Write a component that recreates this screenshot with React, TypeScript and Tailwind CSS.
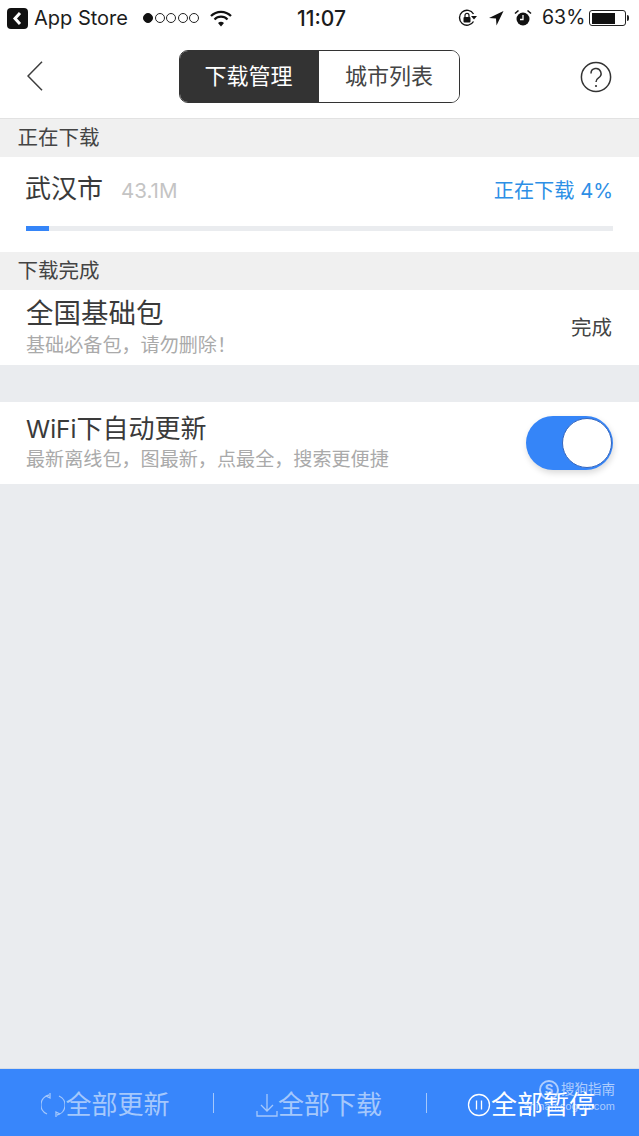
const cjk = "font-['Inter','Noto_Sans_CJK_SC',sans-serif]";

function StatusBar() {
  return (
    <div className="flex h-[36px] items-center bg-white pl-[7px] pr-[10px] text-[20px] text-[#1c1c1c]">
      <div className="flex w-[236px] items-center">
        <svg width="21" height="21" viewBox="0 0 21 21" className="mr-[6px]">
          <rect x="0" y="0" width="21" height="21" rx="4" fill="#111" />
          <path d="M13 5 L8 10.5 L13 16" fill="none" stroke="#fff" strokeWidth="3" />
        </svg>
        <span className="w-[109px] whitespace-nowrap text-[20px] leading-none">App Store</span>
        <div className="flex items-center gap-[1.5px]">
          <span className="h-[10px] w-[10px] rounded-full border border-[#111] bg-[#111]" />
          <span className="h-[10px] w-[10px] rounded-full border border-[#222]" />
          <span className="h-[10px] w-[10px] rounded-full border border-[#222]" />
          <span className="h-[10px] w-[10px] rounded-full border border-[#222]" />
          <span className="h-[10px] w-[10px] rounded-full border border-[#222]" />
        </div>
        <svg width="22" height="17" viewBox="0 0 22 17" className="ml-[11px]">
          <path d="M1 6 A14 14 0 0 1 21 6" fill="none" stroke="#111" strokeWidth="2.2" />
          <path d="M4.5 9.5 A9 9 0 0 1 17.5 9.5" fill="none" stroke="#111" strokeWidth="2.2" />
          <path d="M8 13 A4.5 4.5 0 0 1 14 13 L11 16.5 Z" fill="#111" />
        </svg>
      </div>
      <span className="ml-[54px] text-[21px] font-medium leading-none">11:07</span>
      <div className="ml-auto flex items-center">
        <svg width="20" height="18" viewBox="0 0 20 18">
          <path d="M15.5 12.5 A7.5 7.5 0 1 1 15.5 5" fill="none" stroke="#111" strokeWidth="1.4" />
          <path d="M13 7 L19 7 L16 10.5 Z" fill="#111" />
          <rect x="5.5" y="8" width="7" height="5.5" rx="1" fill="#111" />
          <path d="M7 8 V6.3 A2 2 0 0 1 11 6.3 V8" fill="none" stroke="#111" strokeWidth="1.2" />
        </svg>
        <svg width="16" height="16" viewBox="0 0 16 16" className="ml-[10px]">
          <path d="M15.5 1 L1 8 L8 8.5 L8.5 15.5 Z" fill="#111" />
        </svg>
        <svg width="18" height="18" viewBox="0 0 18 18" className="ml-[10px]">
          <circle cx="9" cy="10" r="6.5" fill="#111" />
          <path d="M9 6 V10.5 H6" fill="none" stroke="#fff" strokeWidth="1.3" />
          <path d="M1 4.5 L4.5 1.5 M17 4.5 L13.5 1.5" stroke="#111" strokeWidth="1.6" />
        </svg>
        <span className="ml-[10px] w-[47px] text-[19.5px] leading-none">63%</span>
        <div className="flex items-center">
          <div className="h-[16px] w-[37px] rounded-[3px] border border-[#222] p-[1.5px]">
            <div className="h-full w-[23px] bg-[#111]" />
          </div>
          <div className="ml-[1px] h-[6px] w-[2px] rounded-r-full bg-[#222]" />
        </div>
      </div>
    </div>
  );
}

function NavBar() {
  return (
    <div className="flex h-[83px] items-center justify-between border-b border-[#e2e2e2] bg-white pb-[2px] pl-[27px] pr-[27px]">
      <svg width="16" height="30" viewBox="0 0 16 30">
        <path d="M15 0.8 L1 15 L15 29.2" fill="none" stroke="#3d3d3d" strokeWidth="1.5" />
      </svg>
      <div className="ml-[16px] flex h-[53px] w-[281px] overflow-hidden rounded-[9px] border border-[#333] text-[22px] leading-none">
        <div className="flex w-[139px] items-center justify-center bg-[#333333] pr-[2px] text-white">下载管理</div>
        <div className="flex flex-1 items-center justify-center bg-white text-[#444]">城市列表</div>
      </div>
      <svg width="32" height="32" viewBox="0 0 32 32" className="mt-[2px]">
        <circle cx="16" cy="16" r="14.6" fill="none" stroke="#333" strokeWidth="1.5" />
        <path d="M11 12.5 A5 5 0 1 1 18.5 16.8 C16.6 18 16 18.8 16 21" fill="none" stroke="#333" strokeWidth="1.5" />
        <circle cx="16" cy="25" r="1.1" fill="#333" />
      </svg>
    </div>
  );
}

function SectionHeader({ title }: { title: string }) {
  return (
    <div className="flex h-[38px] items-center bg-[#f0f0f0] pl-[17.5px] text-[20.5px] leading-none text-[#444]">
      {title}
    </div>
  );
}

function Toggle() {
  return (
    <div className="flex h-[54px] w-[87px] items-center justify-end rounded-full bg-[#3585f8] pr-[1px] shadow-[1px_3px_6px_rgba(0,0,0,0.15)]">
      <div className="h-[50px] w-[50px] rounded-full border border-[#3566bd] bg-white" />
    </div>
  );
}

function BottomItem({ icon, label, active, width }: { icon: React.ReactNode; label: string; active?: boolean; width: string }) {
  return (
    <div className={`flex items-center justify-center pt-[5px] ${width} ${active ? "text-white" : "text-[#a5c8fb]"}`}>
      {icon}
      <span className="whitespace-nowrap text-[26px] leading-none">{label}</span>
    </div>
  );
}

export default function App() {
  return (
    <div className={`relative flex h-[1136px] w-[639px] flex-col overflow-hidden bg-[#eaecef] ${cjk}`}>
      <StatusBar />
      <NavBar />
      <SectionHeader title="正在下载" />
      <div className="h-[95px] bg-white px-[26px]">
        <div className="flex h-[69px] items-center">
          <span className="-ml-[1px] pb-[6px] text-[26px] leading-none text-[#3a3a3a]">武汉市</span>
          <span className="ml-[18px] pb-[1px] text-[20.5px] leading-none text-[#c4c4c4]">43.1M</span>
          <span className="ml-auto text-[20.2px] leading-none text-[#2d8fe6]">正在下载 4%</span>
        </div>
        <div className="h-[5px] w-[587px] bg-[#eaecef]">
          <div className="h-full w-[23px] bg-[#3585f8]" />
        </div>
      </div>
      <SectionHeader title="下载完成" />
      <div className="flex h-[75px] items-center justify-between bg-white pl-[26px] pr-[27px]">
        <div>
          <div className="text-[27.5px] leading-none text-[#3a3a3a]">全国基础包</div>
          <div className="mt-[9px] text-[19.1px] leading-none text-[#aaa]">基础必备包，请勿删除！</div>
        </div>
        <span className="pt-[2px] text-[20.5px] leading-none text-[#444]">完成</span>
      </div>
      <div className="h-[37px]" />
      <div className="flex h-[82px] items-center justify-between bg-white pl-[26px] pr-[26px]">
        <div>
          <div className="text-[26px] leading-none text-[#3a3a3a]">
            <span className="text-[24.5px]">WiFi</span>下自动更新
          </div>
          <div className="mt-[8px] text-[19.1px] leading-none text-[#aaa]">最新离线包，图最新，点最全，搜索更便捷</div>
        </div>
        <Toggle />
      </div>
      <div className="flex-1" />
      <div className="flex h-[68px] items-center border-t border-[#d8dde4] bg-[#3886fb]">
        <BottomItem
          width="w-[213px] -ml-[1px]"
          label="全部更新"
          icon={
            <svg width="24" height="26" viewBox="0 0 24 26" fill="none" stroke="#a5c8fb" strokeWidth="1.3">
              <path d="M8 3 A10 10 0 0 0 6 22" />
              <path d="M9 1 L9 6 L5 4" />
              <path d="M16 23 A10 10 0 0 0 18 4" />
              <path d="M15 25 L15 20 L19 22" />
            </svg>
          }
        />
        <div className="ml-[1px] h-[20px] w-px bg-[#a5c8fb]" />
        <BottomItem
          width="w-[212px] pr-[2px]"
          label="全部下载"
          icon={
            <svg width="22" height="26" viewBox="0 0 22 26" fill="none" stroke="#a5c8fb" strokeWidth="1.3">
              <path d="M11 2 V19 M5 13 L11 19 L17 13" />
              <path d="M1 19 V24 H21 V19" />
            </svg>
          }
        />
        <div className="h-[20px] w-px bg-[#a5c8fb]" />
        <BottomItem
          width="w-[212px] pr-[4px]"
          active
          label="全部暂停"
          icon={
            <svg width="24" height="24" viewBox="0 0 24 24" fill="none" stroke="#fff" strokeWidth="1.3">
              <circle cx="12" cy="12" r="10.5" />
              <path d="M9.5 7.5 V16.5 M14.5 7.5 V16.5" />
            </svg>
          }
        />
      </div>
      <div className="absolute right-[24px] bottom-[24px] flex w-[90px] flex-col items-end text-[rgba(255,255,255,0.6)]">
        <div className="flex items-center whitespace-nowrap text-[13.5px] leading-none">
          <span className="mr-[2px] flex h-[20px] w-[20px] items-center justify-center rounded-full border-2 border-[rgba(255,255,255,0.6)] text-[13px] font-bold">S</span>
          搜狗指南
        </div>
        <div className="mt-[2px] whitespace-nowrap text-[10.5px] leading-none">zhinan.sogou.com</div>
      </div>
    </div>
  );
}
